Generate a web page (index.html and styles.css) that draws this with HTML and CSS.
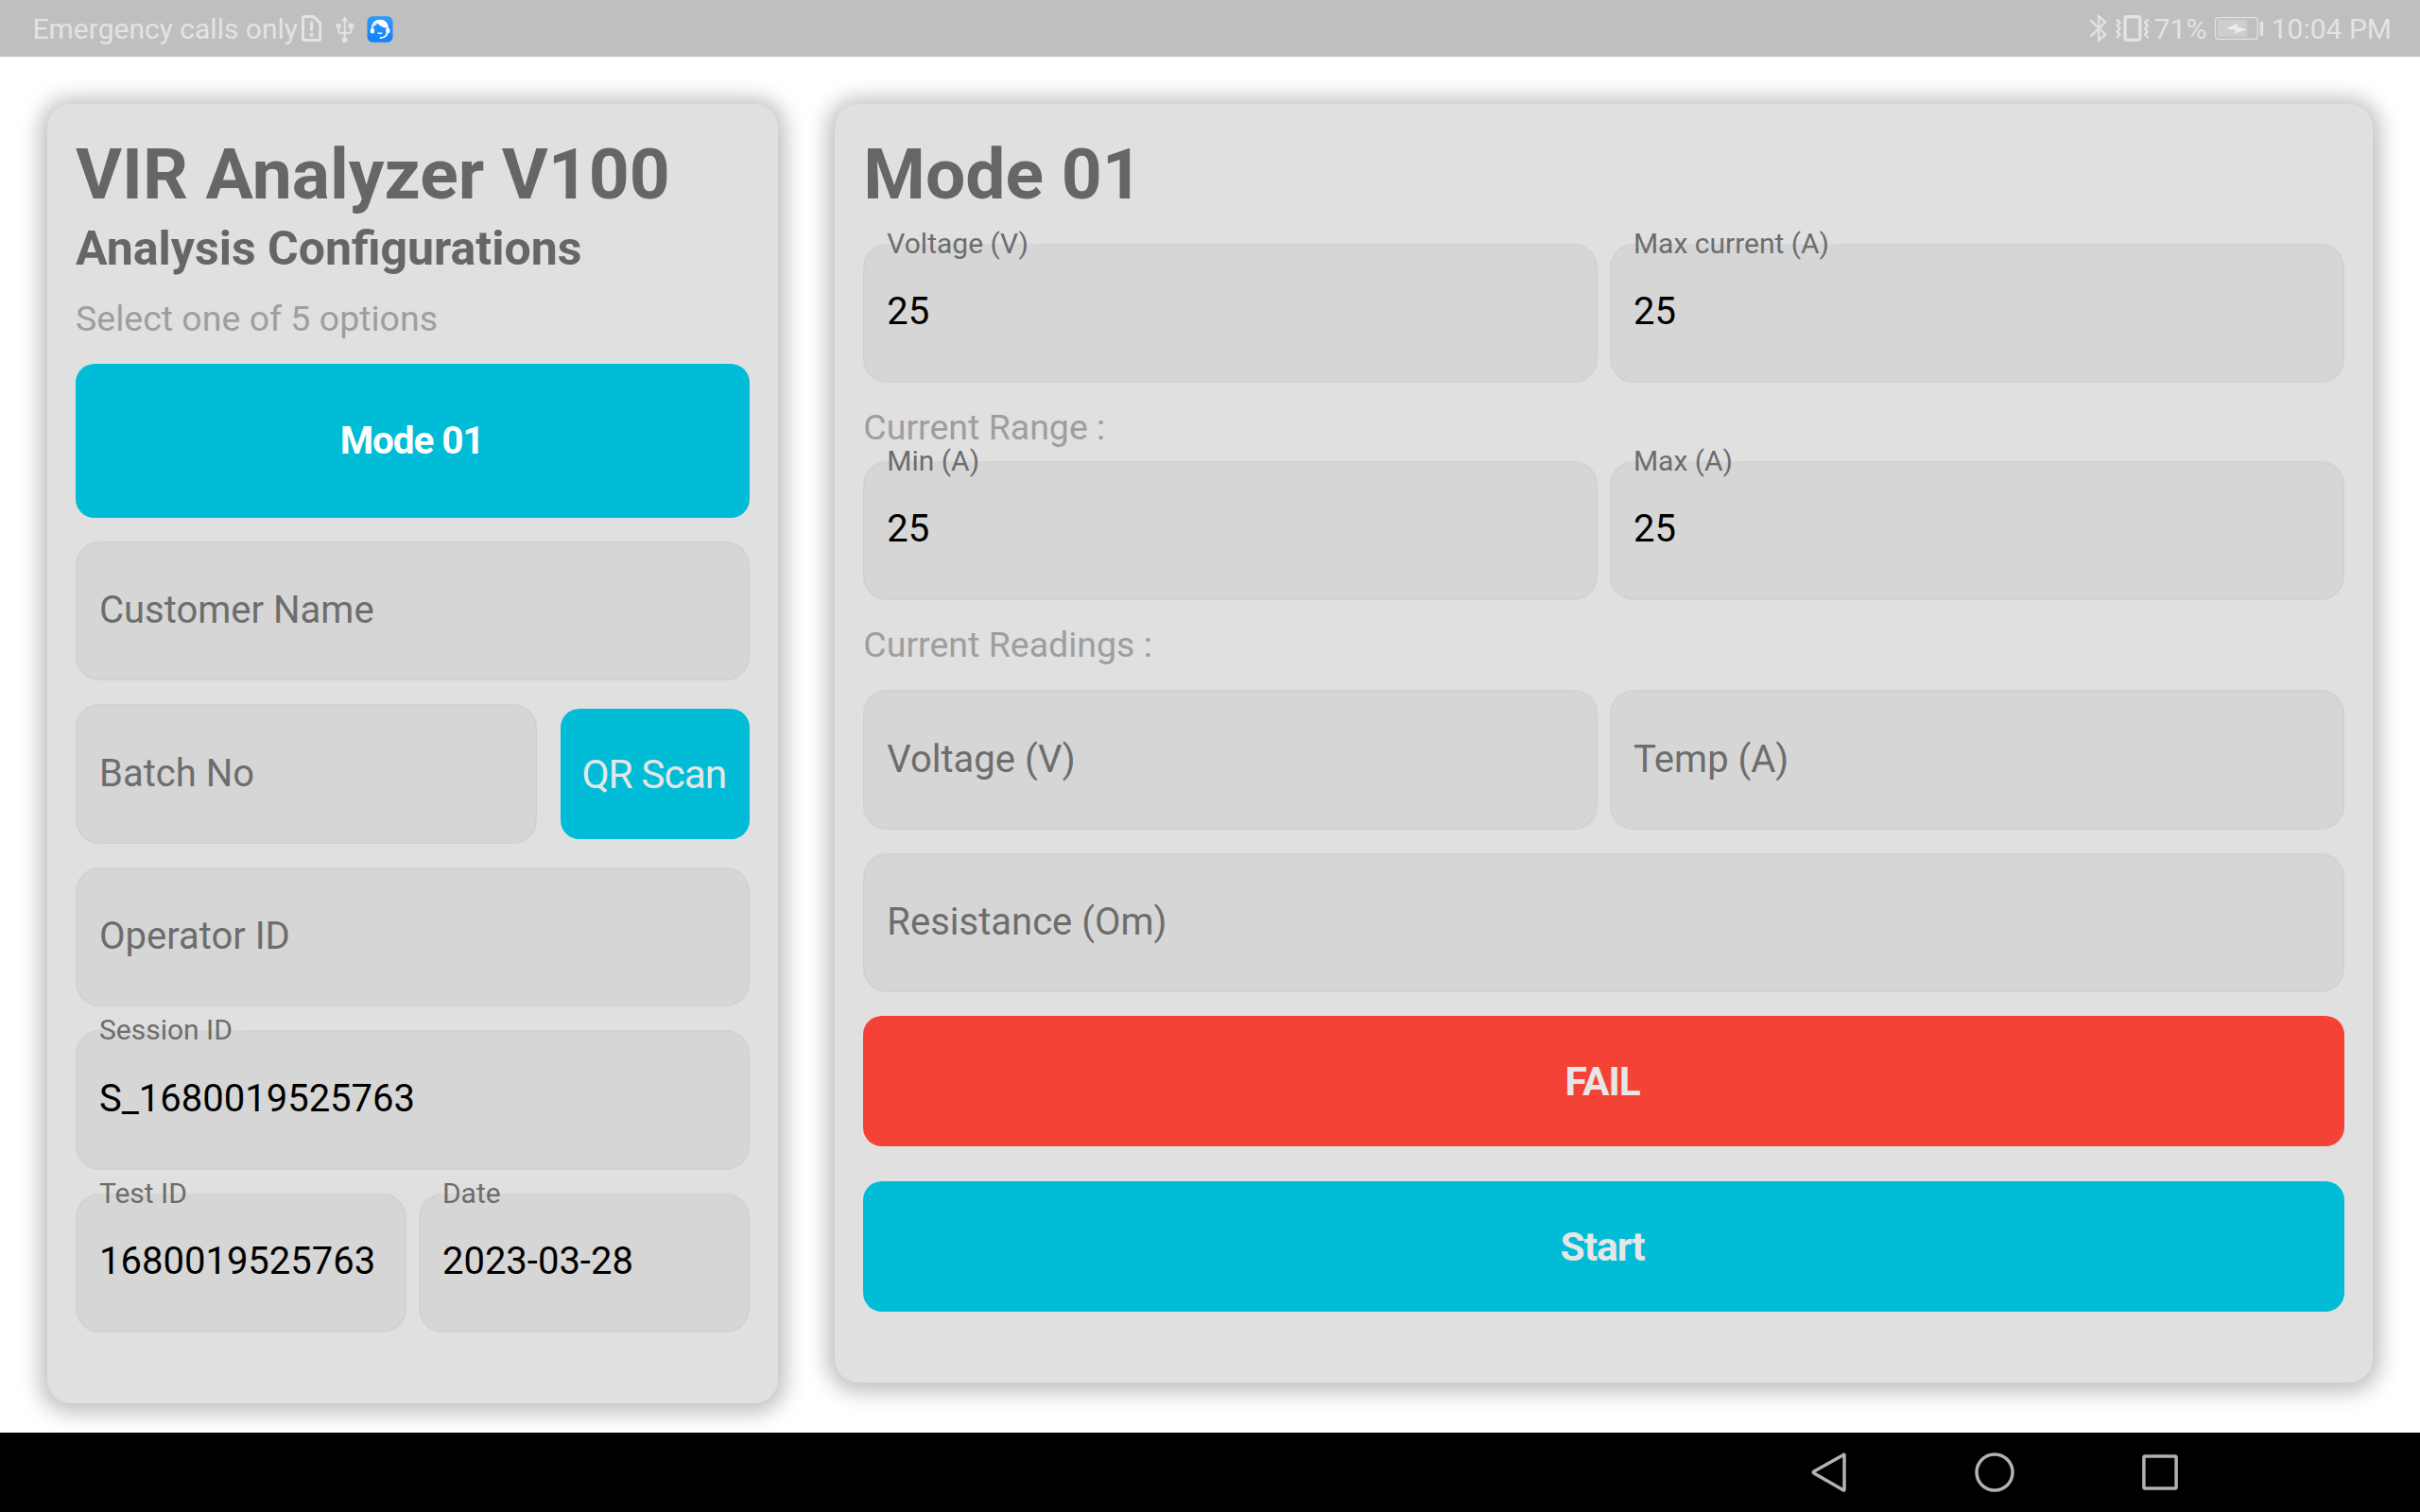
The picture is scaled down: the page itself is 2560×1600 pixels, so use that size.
FILE: index.html
```html
<!DOCTYPE html>
<html lang="en">
<head>
<meta charset="utf-8">
<title>VIR Analyzer V100</title>
<link rel="stylesheet" href="styles.css">
</head>
<body>
<header class="status">
  <span class="carrier">Emergency calls only</span>
  <svg class="ic-sim" width="22" height="28" viewBox="0 0 22 28" fill="none" stroke="#e3e3e3"><path d="M3.3 1.5H12.6L19.7 8.6V24.7Q19.7 26.5 17.9 26.5H3.3Q1.5 26.5 1.5 24.7V3.3Q1.5 1.5 3.3 1.5Z" stroke-width="3" stroke-linejoin="round"/><path d="M10.6 7.5V15.5" stroke-width="3" stroke-linecap="round"/><circle cx="10.6" cy="20.8" r="2.1" fill="#e3e3e3" stroke="none"/></svg>
  <svg class="ic-usb" width="20" height="28" viewBox="0 0 20 28" fill="none" stroke="#e3e3e3" stroke-width="2"><path d="M9.7 4V25"/><path d="M3 10.5V14.5Q3 18 6.5 18H13Q16.600 18 16.600 14.500V10.500"/><g fill="#e3e3e3" stroke="none"><path d="M9.700 0L13.200 5.400H6.200Z"/><circle cx="3" cy="10.500" r="2.800"/><rect x="13.700" y="7.800" width="5.600" height="5.400"/><circle cx="9.700" cy="25.200" r="2.900"/></g></svg>
  <svg class="ic-app" width="28" height="28" viewBox="0 0 28 28"><defs><linearGradient id="app" x1="0" y1="0" x2="0" y2="1"><stop offset="0" stop-color="#2e9bfb"/><stop offset="1" stop-color="#137ffb"/></linearGradient></defs><rect x=".5" y=".3" width="27" height="27.400" rx="5.500" fill="url(#app)"/><path d="M5.600 13.500C5.600 7.500 9.300 4.600 14 4.600S22.400 7.500 22.400 13.500C22.400 19.500 19.500 23 14.500 23.200" fill="none" stroke="#fff" stroke-width="1.700" stroke-linecap="round"/><path d="M9.800 6.600C12 4 18 3.800 20.500 7.600C21.400 9 21.600 11 21.300 12.800C17.500 12.300 13.600 10.500 11.300 7.300C10.300 9.200 8.700 10.400 6.400 11Z" fill="#fff"/><rect x="3.800" y="13" width="4.200" height="5.200" rx="1.500" fill="#fff"/><rect x="20.200" y="13" width="4.200" height="5.200" rx="1.500" fill="#fff"/><path d="M11.500 17.900Q14 19 16.200 17.900" fill="none" stroke="#fff" stroke-width="1.200"/></svg>
  <span class="grow"></span>
  <svg class="ic-bt" width="20" height="30" viewBox="0 0 20 30" fill="none" stroke="#e3e3e3" stroke-width="2.200"><path d="M1.300 6.300L17.200 21.400L10.200 27.800V2.200L17.200 8.600L1.300 23.600"/></svg>
  <svg class="ic-vib" width="36" height="28" viewBox="0 0 36 28" fill="none" stroke="#e3e3e3"><rect x="10" y="1.800" width="15.800" height="24.400" rx="2.200" stroke-width="3.400"/><path d="M1 4.500L4.600 7.800L1.800 11L4.600 14.200L1.800 17.400L4.600 20.600L1 24M34.600 4.500L31 7.800L33.800 11L31 14.200L33.800 17.400L31 20.600L34.600 24" stroke-width="2.400"/></svg>
  <span class="level">71%</span>
  <svg class="ic-bat" width="52" height="24" viewBox="0 0 52 24"><rect x=".6" y=".6" width="44.600" height="22.800" rx="3" fill="none" stroke="#e3e3e3" stroke-width="1.200"/><rect x="3" y="3" width="31.300" height="18" rx="1" fill="#cecece"/><path d="M12 12.300L24.500 6.500L23.300 10.800L34 12.800L20.800 18L22.200 13.600Z" fill="#ededed"/><rect x="47.700" y="4.600" width="3.500" height="15.400" rx="1.500" fill="#e3e3e3"/></svg>
  <span class="clock">10:04 PM</span>
</header>

<main class="screen">
  <section class="panel panel-config">
    <h1 class="title">VIR Analyzer V100</h1>
    <h2 class="subtitle">Analysis Configurations</h2>
    <p class="note note-select">Select one of 5 options</p>
    <div class="stack">
      <button class="btn btn-mode">Mode 01</button>
      <div class="field hint">Customer Name</div>
      <div class="row row-batch">
        <div class="field hint">Batch No</div>
        <button class="btn btn-scan">QR Scan</button>
      </div>
      <div class="field hint">Operator ID</div>
      <div class="field filled"><span class="label">Session ID</span>S_1680019525763</div>
      <div class="row">
        <div class="field filled"><span class="label">Test ID</span>1680019525763</div>
        <div class="field filled"><span class="label">Date</span>2023-03-28</div>
      </div>
    </div>
  </section>

  <section class="panel panel-mode">
    <h1 class="title">Mode 01</h1>
    <div class="row row-limits">
      <div class="field filled"><span class="label">Voltage (V)</span>25</div>
      <div class="field filled"><span class="label">Max current (A)</span>25</div>
    </div>
    <p class="note note-range">Current Range :</p>
    <div class="row">
      <div class="field filled"><span class="label">Min (A)</span>25</div>
      <div class="field filled"><span class="label">Max (A)</span>25</div>
    </div>
    <p class="note note-readings">Current Readings :</p>
    <div class="stack">
      <div class="row">
        <div class="field hint">Voltage (V)</div>
        <div class="field hint">Temp (A)</div>
      </div>
      <div class="field hint">Resistance (Om)</div>
      <button class="btn btn-fail">FAIL</button>
      <button class="btn btn-start">Start</button>
    </div>
  </section>
</main>

<nav class="navbar">
  <span class="nav-btn"><svg width="44" height="44" viewBox="0 0 44 44" fill="none" stroke="#b2b2b2" stroke-width="3.500" stroke-linejoin="round"><path d="M37.200 3.400Q38 2.400 38 4V40Q38 41.600 36.800 40.800L6 23Q4.600 22 6 21Z"/></svg></span>
  <span class="nav-btn"><svg width="44" height="44" viewBox="0 0 44 44" fill="none" stroke="#b2b2b2" stroke-width="3.500"><circle cx="22" cy="22" r="19"/></svg></span>
  <span class="nav-btn"><svg width="44" height="44" viewBox="0 0 44 44" fill="none" stroke="#b2b2b2" stroke-width="3.500"><rect x="4.900" y="4.900" width="34.200" height="34.200" rx="1.500"/></svg></span>
</nav>
</body>
</html>
```
FILE: styles.css
```css
* { box-sizing: border-box; }
body {
  margin: 0;
  width: 2560px;
  height: 1600px;
  display: flex;
  flex-direction: column;
  background: #fff;
  font-family: Roboto, "Liberation Sans", sans-serif;
  overflow: hidden;
}

/* status bar */
.status {
  height: 60px;
  flex: none;
  display: flex;
  align-items: flex-start;
  padding: 0 30px 0 34.5px;
  background: #bfbfbf;
  color: #e3e3e3;
  font-size: 30px;
  line-height: 35px;
  white-space: nowrap;
}
.status svg { flex: none; display: block; }
.carrier, .level, .clock { margin-top: 13px; }
.carrier { width: 284.5px; }
.ic-sim { margin-top: 16px; }
.ic-usb { margin: 17px 0 0 13.5px; }
.ic-app { margin: 17px 0 0 13.5px; }
.grow { flex: 1; }
.ic-bt { margin: 15px 0 0; }
.ic-vib { margin: 16px 0 0 8.5px; }
.level { margin-left: 4.5px; width: 64px; }
.ic-bat { margin: 18px 8px 0 0; }

/* panels */
.screen {
  flex: 1;
  min-height: 0;
  display: flex;
  align-items: flex-start;
  gap: 60px;
  padding: 50px 50px 0;
}
.panel {
  padding: 30px;
  border-radius: 25px;
  background: #e0e0e0;
  box-shadow: 0 2px 22px 8px rgba(0, 0, 0, .25);
}
.panel-config { width: 773.33px; height: 1375px; }
.panel-mode { flex: 1; height: 1352.5px; }
.title {
  margin: 0;
  color: #666;
  font-size: 75px;
  line-height: 88px;
  font-weight: 700;
}
.subtitle {
  margin: 6px 0 0;
  color: #666;
  font-size: 50px;
  line-height: 58px;
  font-weight: 700;
}
.note {
  margin: 0;
  color: #9e9e9e;
  font-size: 37.5px;
  line-height: 44px;
}
.note-select { margin: 23px 0 26px; }
.note-range { margin: 25px 0 13.5px; }
.note-readings { margin: 25px 0 26px; }
.stack { display: flex; flex-direction: column; gap: 25px; }
.row { display: flex; align-items: center; gap: 12.5px; }
.row-batch { gap: 25px; }
.row-limits { margin-top: 29.5px; }

/* text fields */
.field {
  position: relative;
  flex: 1 1 0;
  min-width: 0;
  height: 147.5px;
  display: flex;
  align-items: center;
  padding: 0 23px 1.5px;
  border: 2px solid #d2d2d2;
  border-radius: 25px;
  background: #d6d6d6;
  color: #000;
  font-size: 40px;
  line-height: 47px;
  white-space: nowrap;
}
.stack > .field { flex: none; }
.filled { padding-bottom: 3.5px; }
.hint { color: #6d6d6d; }
.label {
  position: absolute;
  z-index: 0;
  left: 23px;
  top: -20px;
  color: #6d6d6d;
  font-size: 30px;
  line-height: 35px;
}
/* opens the outline behind a floating label */
.label::before {
  content: "";
  position: absolute;
  z-index: -1;
  left: -3px;
  right: -11px;
  top: 18px;
  height: 2px;
  background: #d6d6d6;
}

/* buttons */
.btn {
  flex: none;
  height: 137.5px;
  padding: 1.5px 3px 0 0;
  border: 0;
  border-radius: 20px;
  background: #00bcd6;
  color: #e6e6e6;
  font-family: inherit;
  font-size: 42.5px;
  line-height: 49px;
  font-weight: 700;
  letter-spacing: -1.025px;
}
.btn-mode {
  height: 162.5px;
  padding: 0 2px 0 0;
  color: #fff;
  font-size: 40.5px;
  letter-spacing: -1.1px;
}
.btn-scan { width: 200px; font-weight: 400; }
.btn-fail { background: #f44336; }
.btn-start { margin-top: 12.5px; }

/* navigation bar */
.navbar {
  height: 84px;
  flex: none;
  display: flex;
  justify-content: flex-end;
  padding-right: 187.5px;
  background: #000;
}
.nav-btn {
  width: 175px;
  display: flex;
  align-items: center;
  justify-content: center;
}
```
